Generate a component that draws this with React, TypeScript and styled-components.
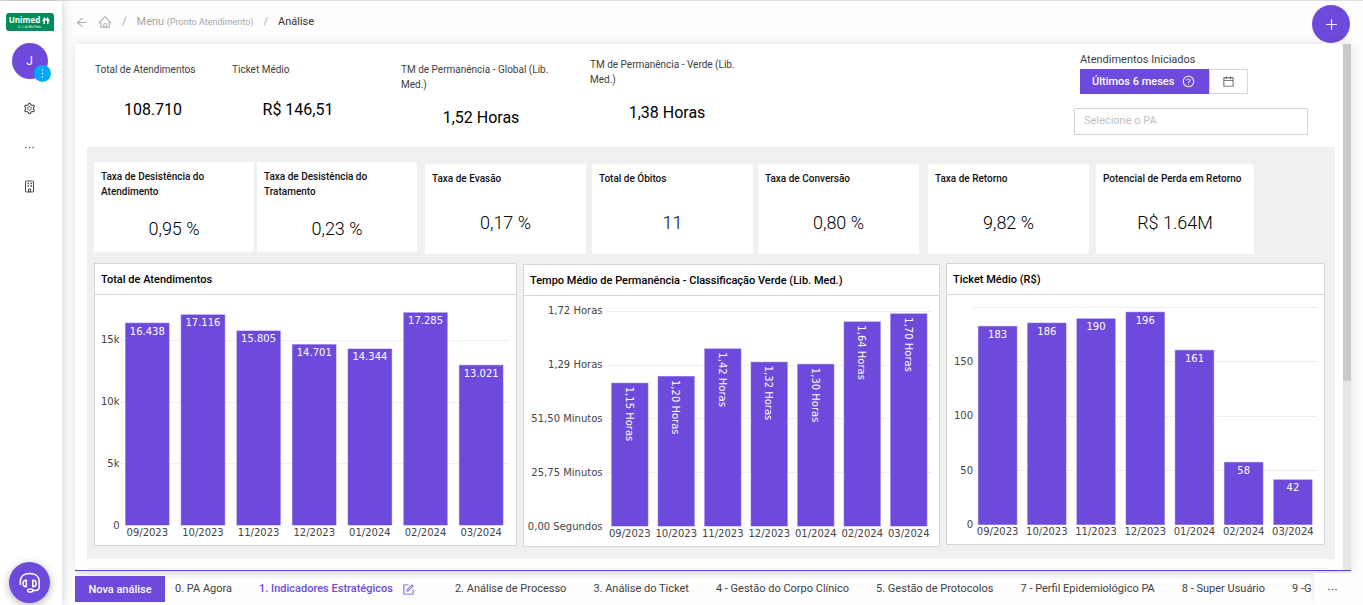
import React from "react";
import styled, { createGlobalStyle } from "styled-components";
import {
  AiOutlineArrowLeft,
  AiOutlineCalendar,
  AiOutlineEllipsis,
  AiOutlineForm,
  AiOutlineHome,
  AiOutlineMore,
  AiOutlinePlus,
  AiOutlineQuestionCircle,
  AiOutlineSetting,
} from "react-icons/ai";

const purple = "#6d4adb";

const GlobalStyle = createGlobalStyle`
  *, *::before, *::after { box-sizing: border-box; }
  body {
    margin: 0;
    background: #fdfdfd;
    color: #404040;
    font-family: Roboto, "Liberation Sans", sans-serif;
    font-size: 11px;
  }
  button, input { font: inherit; }
  button { padding: 0; border: 0; background: none; color: inherit; cursor: pointer; }
  a { color: inherit; text-decoration: none; }
  svg { display: block; }
`;

const Shell = styled.div`
  display: flex;
  min-height: 100vh;
  border-top: 1px solid #dedede;
`;

/* Sidebar */

const Sidebar = styled.nav`
  display: flex;
  flex-direction: column;
  align-items: center;
  flex: 0 0 62px;
  padding: 12px 3px 2px 0;
  background: #fff;
  box-shadow: 0 0 10px rgba(0, 0, 0, 0.2);
  z-index: 1;
`;

const Logo = styled.a`
  display: flex;
  flex-direction: column;
  align-items: center;
  width: 48px;
  height: 18px;
  border-radius: 3px 3px 0 3px;
  background: #008c58;
  color: #fff;
`;

const LogoName = styled.span`
  display: flex;
  align-items: center;
  gap: 2px;
  height: 12px;
  padding-top: 2px;
  font: 700 8px/12px "Open Sans", sans-serif;
`;

const LogoTagline = styled.span`
  height: 4px;
  font-size: 3px;
  line-height: 4px;
`;

const Avatar = styled.button`
  position: relative;
  width: 36px;
  height: 36px;
  margin-top: 12px;
  border-radius: 50%;
  background: ${purple};
  color: #fff;
  font-size: 12px;
`;

const AvatarBadge = styled.span`
  position: absolute;
  right: -3px;
  bottom: -3px;
  display: grid;
  place-items: center;
  width: 17px;
  height: 17px;
  border-radius: 50%;
  background: #00a8ff;
  font-size: 13px;
`;

const SideMenu = styled.div`
  display: flex;
  flex-direction: column;
  align-items: center;
  gap: 26px;
  margin-top: 23px;
  color: #444;
  font-size: 13px;
`;

const SideButton = styled.button`
  display: block;
  line-height: 0;
`;

const SupportButton = styled.button`
  display: grid;
  place-items: center;
  width: 41px;
  height: 41px;
  margin-top: auto;
  border-radius: 50%;
  background: ${purple};
  color: #fff;
  box-shadow: 0 2px 8px rgba(0, 0, 0, 0.3);
`;

/* Header */

const Main = styled.div`
  display: flex;
  flex-direction: column;
  flex: 1;
  min-width: 0;
  padding: 0 12px 0 13px;
`;

const Header = styled.header`
  display: flex;
  align-items: center;
  justify-content: space-between;
  height: 43px;
  padding-top: 3px;
  padding-right: 1px;
`;

const Breadcrumb = styled.nav`
  display: flex;
  align-items: center;
  gap: 10px;
  height: 16px;
  margin-bottom: 4px;
  color: #a6a6a6;
  line-height: 16px;
`;

const Small = styled.small`
  font-size: 9px;
`;

const Current = styled.span`
  color: #333;
`;

const AddButton = styled.button`
  display: grid;
  place-items: center;
  width: 38px;
  height: 38px;
  border-radius: 50%;
  background: ${purple};
  color: #fff;
  font-size: 15px;
`;

/* Dashboard panel */

const Panel = styled.main`
  display: flex;
  flex: 1;
  border-bottom: 1px solid #5b3fc4;
  background: #fff;
  box-shadow: 0 0 10px rgba(0, 0, 0, 0.12);
`;

const Content = styled.div`
  display: flex;
  flex-direction: column;
  flex: 1;
  min-width: 0;
  padding: 13px 8px 0 12px;
`;

const ScrollTrack = styled.div`
  flex: 0 0 8px;
  background: #e6e6e6;
`;

const ScrollThumb = styled.div`
  height: 64%;
  background: #c9c9c9;
`;

const Summary = styled.section`
  display: flex;
  justify-content: space-between;
  height: 90px;
  padding-left: 1px;
`;

const SummaryTiles = styled.div`
  display: grid;
  grid-template-columns: 137px 169px 189px 168px;
  height: 81px;
`;

const Tile = styled.article<{ $align: "start" | "end"; $width: number; $height: number; $card?: boolean }>`
  display: flex;
  flex-direction: column;
  align-self: ${(p) => p.$align};
  width: 100%;
  max-width: ${(p) => p.$width}px;
  height: ${(p) => p.$height}px;
  padding: ${(p) => (p.$card ? "7px 7px 0" : "0 7px")};
  background: #fff;
`;

const TileLabel = styled.h2<{ $strong?: boolean }>`
  margin: 0;
  color: ${(p) => (p.$strong ? "#111" : "#404040")};
  font-size: 10px;
  font-weight: ${(p) => (p.$strong ? 500 : 400)};
  line-height: 15px;
`;

const TileValue = styled.p<{ $card?: boolean }>`
  display: grid;
  flex: 1;
  place-items: center;
  margin: ${(p) => (p.$card ? 6 : 5)}px 0 0;
  color: #000;
  font-size: ${(p) => (p.$card ? 18 : 16)}px;
  font-weight: ${(p) => (p.$card ? 300 : 400)};
  line-height: 20px;
`;

const Filters = styled.div`
  display: flex;
  flex-direction: column;
  gap: 14px;
  width: 234px;
  margin: -6px 27px 0 0;
`;

const PeriodFilter = styled.div`
  padding-left: 6px;
`;

const FilterLabel = styled.span`
  display: block;
  height: 18px;
  line-height: 18px;
`;

const ButtonGroup = styled.div`
  display: flex;
`;

const PeriodButton = styled.button`
  display: flex;
  align-items: center;
  gap: 8px;
  height: 25px;
  padding: 0 14px 0 12px;
  background: ${purple};
  color: #fff;
  font-weight: 500;
`;

const CalendarButton = styled.button`
  display: grid;
  place-items: center;
  width: 39px;
  height: 25px;
  border: 1px solid #d9d9d9;
  background: #fff;
  color: #555;
  font-size: 13px;
`;

const UnitInput = styled.input`
  width: 100%;
  height: 27px;
  padding: 0 9px 2px;
  border: 1px solid #d3d3d3;
  border-radius: 1px;
  background: #fff;
  &::placeholder { color: #bfbfbf; opacity: 1; }
`;

const Board = styled.section`
  padding: 15px 10px 12px 7px;
  background: #f0f0f0;
`;

const RateRow = styled.div`
  display: grid;
  grid-template-columns: 163fr 168fr 167fr 166fr 170fr 168fr 160fr 69fr;
  height: 92px;
  margin-bottom: 9px;
`;

const ChartRow = styled.div`
  display: grid;
  grid-template-columns: 423fr 417fr 379fr;
  gap: 6px;
  min-height: 284px;
`;

const ChartCard = styled.article<{ $align: "start" | "end" }>`
  align-self: ${(p) => p.$align};
  min-width: 0;
  border: 1px solid #d6d6d6;
  background: #fff;
`;

const ChartTitle = styled.h2`
  height: 31px;
  margin: 0;
  padding: 1px 6px 0;
  border-bottom: 1px solid #d6d6d6;
  color: #000;
  font-size: 11px;
  font-weight: 500;
  line-height: 29px;
  white-space: nowrap;
`;

const Plot = styled.svg`
  width: 100%;
  height: auto;
  font-family: Verdana, "DejaVu Sans", sans-serif;
  font-size: 10px;
  fill: #444;
`;

const NextBoard = styled.section`
  flex: 1;
  margin: 9px 7px 0 0;
  border-top: 1px solid #f0f0f0;
`;

/* Bottom tab bar */

const TabBar = styled.nav`
  display: flex;
  align-items: center;
  height: 34px;
  padding-top: 2px;
  background: linear-gradient(rgba(0, 0, 0, 0.06), rgba(0, 0, 0, 0) 8px);
`;

const NewButton = styled.button`
  flex: none;
  width: 90px;
  height: 26px;
  background: ${purple};
  color: #fff;
  font-weight: 500;
`;

const Tabs = styled.div`
  display: flex;
  flex: 1;
  gap: 27px;
  min-width: 0;
  padding-left: 10px;
  overflow: hidden;
  white-space: nowrap;
`;

const Tab = styled.a<{ $active?: boolean }>`
  display: flex;
  flex: none;
  align-items: center;
  gap: 9px;
  padding-right: ${(p) => (p.$active ? 13 : 0)}px;
  color: ${(p) => (p.$active ? purple : "#404040")};
  font-weight: ${(p) => (p.$active ? 500 : 400)};
  line-height: 16px;
`;

const MoreTabs = styled.button`
  display: grid;
  flex: 0 0 37px;
  place-items: center;
  align-self: stretch;
  background: #fdfdfd;
  box-shadow: -4px 0 6px -4px rgba(0, 0, 0, 0.12);
  font-size: 13px;
`;

/* Data */

type Metric = { label: string; value: string; align: "start" | "end"; width: number };

const summary: Metric[] = [
  { label: "Total de Atendimentos", value: "108.710", align: "end", width: 130 },
  { label: "Ticket Médio", value: "R$ 146,51", align: "end", width: 146 },
  { label: "TM de Permanência - Global (Lib. Med.)", value: "1,52 Horas", align: "end", width: 174 },
  { label: "TM de Permanência - Verde (Lib. Med.)", value: "1,38 Horas", align: "start", width: 168 },
];

const rates: Metric[] = [
  { label: "Taxa de Desistência do Atendimento", value: "0,95 %", align: "start", width: 160 },
  { label: "Taxa de Desistência do Tratamento", value: "0,23 %", align: "start", width: 160 },
  { label: "Taxa de Evasão", value: "0,17 %", align: "end", width: 161 },
  { label: "Total de Óbitos", value: "11", align: "end", width: 161 },
  { label: "Taxa de Conversão", value: "0,80 %", align: "end", width: 161 },
  { label: "Taxa de Retorno", value: "9,82 %", align: "end", width: 161 },
  { label: "Potencial de Perda em Retorno", value: "R$ 1.64M", align: "end", width: 158 },
];

const months = ["09/2023", "10/2023", "11/2023", "12/2023", "01/2024", "02/2024", "03/2024"];

type Chart = {
  title: string;
  align: "start" | "end";
  width: number;
  height: number;
  left: number;
  right: number;
  base: number;
  scale: number;
  ticks: { at: number; text: string }[];
  tickGap: number;
  monthY: number;
  bars: { value: number; text: string }[];
  vertical?: boolean;
};

const charts: Chart[] = [
  {
    title: "Total de Atendimentos",
    align: "start",
    width: 421,
    height: 250,
    left: 24.5,
    right: 414,
    base: 230.5,
    scale: 0.01234,
    ticks: [
      { at: 0, text: "0" },
      { at: 5000, text: "5k" },
      { at: 10000, text: "10k" },
      { at: 15000, text: "15k" },
    ],
    tickGap: 0,
    monthY: 241,
    bars: [
      { value: 16438, text: "16.438" },
      { value: 17116, text: "17.116" },
      { value: 15805, text: "15.805" },
      { value: 14701, text: "14.701" },
      { value: 14344, text: "14.344" },
      { value: 17285, text: "17.285" },
      { value: 13021, text: "13.021" },
    ],
  },
  {
    title: "Tempo Médio de Permanência - Classificação Verde (Lib. Med.)",
    align: "end",
    width: 415,
    height: 250,
    left: 82.5,
    right: 408,
    base: 230.5,
    scale: 125.1,
    ticks: [
      { at: 0, text: "0,00 Segundos" },
      { at: 0.43, text: "25,75 Minutos" },
      { at: 0.86, text: "51,50 Minutos" },
      { at: 1.29, text: "1,29 Horas" },
      { at: 1.72, text: "1,72 Horas" },
    ],
    tickGap: 4,
    monthY: 241,
    bars: [
      { value: 1.149, text: "1,15 Horas" },
      { value: 1.203, text: "1,20 Horas" },
      { value: 1.424, text: "1,42 Horas" },
      { value: 1.317, text: "1,32 Horas" },
      { value: 1.3, text: "1,30 Horas" },
      { value: 1.64, text: "1,64 Horas" },
      { value: 1.704, text: "1,70 Horas" },
    ],
    vertical: true,
  },
  {
    title: "Ticket Médio (R$)",
    align: "start",
    width: 377,
    height: 249,
    left: 26,
    right: 370.5,
    base: 230,
    scale: 1.088,
    ticks: [
      { at: 0, text: "0" },
      { at: 50, text: "50" },
      { at: 100, text: "100" },
      { at: 150, text: "150" },
      { at: 200, text: "" },
    ],
    tickGap: 0,
    monthY: 240,
    bars: [
      { value: 183, text: "183" },
      { value: 186, text: "186" },
      { value: 190, text: "190" },
      { value: 196, text: "196" },
      { value: 161, text: "161" },
      { value: 58, text: "58" },
      { value: 42, text: "42" },
    ],
  },
];

const tabs = [
  "0. PA Agora",
  "1. Indicadores Estratégicos",
  "2. Análise de Processo",
  "3. Análise do Ticket",
  "4 - Gestão do Corpo Clínico",
  "5. Gestão de Protocolos",
  "7 - Perfil Epidemiológico PA",
  "8 - Super Usuário",
  "9 -G",
];

function MetricTile({ metric, card }: { metric: Metric; card?: boolean }) {
  return (
    <Tile $align={metric.align} $width={metric.width} $height={card ? 90 : 76} $card={card}>
      <TileLabel $strong={card}>{metric.label}</TileLabel>
      <TileValue $card={card}>{metric.value}</TileValue>
    </Tile>
  );
}

function BarChart({ chart }: { chart: Chart }) {
  const step = (chart.right - chart.left) / months.length;
  const y = (v: number) => chart.base - v * chart.scale;
  return (
    <ChartCard $align={chart.align}>
      <ChartTitle>{chart.title}</ChartTitle>
      <Plot viewBox={`0 0 ${chart.width} ${chart.height}`} role="img" aria-label={chart.title}>
        {chart.ticks.map((t) => (
          <g key={t.at}>
            {t.at > 0 && (
              <line
                x1={chart.left}
                x2={chart.right}
                y1={Math.floor(y(t.at)) + 0.5}
                y2={Math.floor(y(t.at)) + 0.5}
                stroke="#eee"
              />
            )}
            <text x={chart.left - chart.tickGap} y={y(t.at) + 3} textAnchor="end">
              {t.text}
            </text>
          </g>
        ))}
        {chart.bars.map((b, i) => {
          const x = chart.left + step * (i + 0.1);
          const mid = chart.left + step * (i + 0.5);
          const top = y(b.value);
          return (
            <g key={months[i]}>
              <rect x={x} y={top} width={step * 0.8} height={chart.base - top} fill={purple} stroke="#fff" strokeOpacity={0.5} />
              {chart.vertical ? (
                <text transform={`translate(${mid - 4} ${top + 4}) rotate(90)`} fill="#fff">
                  {b.text}
                </text>
              ) : (
                <text x={mid} y={top + 12} textAnchor="middle" fill="#fff">
                  {b.text}
                </text>
              )}
              <text x={mid} y={chart.monthY} textAnchor="middle">
                {months[i]}
              </text>
            </g>
          );
        })}
      </Plot>
    </ChartCard>
  );
}

function HeadsetIcon() {
  return (
    <svg width="22" height="22" viewBox="0 0 22 22" fill="none" stroke="currentColor" strokeWidth="1.500" strokeLinecap="round" strokeLinejoin="round">
      <path d="M1.300 12.500V9.500C1.300 4.500 5 1.500 10.700 1.500S20.200 4.500 20.200 9.500V15C20.200 17.200 18.800 18.500 16.500 18.500H14" />
      <path d="M7.300 8.300C5.200 8.300 4 9.500 4 11.500S5.200 14.700 7.300 14.700Z" />
      <path d="M13.800 8.300C15.900 8.300 17.200 9.500 17.200 11.500S15.900 14.700 13.800 14.700Z" />
      <rect x="8.500" y="17.200" width="5.500" height="2.800" rx="1.400" />
    </svg>
  );
}

function BuildingIcon() {
  return (
    <svg width="13" height="13" viewBox="0 0 13 13" fill="none" stroke="currentColor">
      <rect x="2.500" y="1" width="8" height="11" rx="1" />
      <path d="M4.500 3.500h1.500M7.500 3.500h1.500M4.500 6h1.500M7.500 6h1.500" strokeWidth="1.500" />
      <path d="M5.500 12V9h2v3" />
    </svg>
  );
}

function PineMark() {
  return (
    <svg width="8" height="7" viewBox="0 0 8 7" fill="currentColor">
      <path d="M2.300 0 4 2.200 5.700 0 8 4.200H6.600V7H5V4L4 2.900 3 4V7H1.400V4.200H0Z" />
    </svg>
  );
}

export default function App() {
  return (
    <>
      <GlobalStyle />
      <Shell>
        <Sidebar aria-label="Principal">
          <Logo href="#">
            <LogoName>
              Unimed <PineMark />
            </LogoName>
            <LogoTagline>S. J. do Rio Preto</LogoTagline>
          </Logo>
          <Avatar>
            J
            <AvatarBadge>
              <AiOutlineMore />
            </AvatarBadge>
          </Avatar>
          <SideMenu>
            <SideButton aria-label="Configurações">
              <AiOutlineSetting />
            </SideButton>
            <SideButton aria-label="Mais opções">
              <AiOutlineEllipsis />
            </SideButton>
            <SideButton aria-label="Unidades">
              <BuildingIcon />
            </SideButton>
          </SideMenu>
          <SupportButton aria-label="Suporte">
            <HeadsetIcon />
          </SupportButton>
        </Sidebar>

        <Main>
          <Header>
            <Breadcrumb aria-label="Navegação">
              <a href="#" aria-label="Voltar">
                <AiOutlineArrowLeft size={13} />
              </a>
              <a href="#" aria-label="Início">
                <AiOutlineHome size={14} />
              </a>
              <span>/</span>
              <a href="#">
                Menu <Small>(Pronto Atendimento)</Small>
              </a>
              <span>/</span>
              <Current>Análise</Current>
            </Breadcrumb>
            <AddButton aria-label="Adicionar">
              <AiOutlinePlus />
            </AddButton>
          </Header>

          <Panel>
            <Content>
              <Summary>
                <SummaryTiles>
                  {summary.map((m) => (
                    <MetricTile key={m.label} metric={m} />
                  ))}
                </SummaryTiles>
                <Filters>
                  <PeriodFilter role="group" aria-labelledby="period-label">
                    <FilterLabel id="period-label">Atendimentos Iniciados</FilterLabel>
                    <ButtonGroup>
                      <PeriodButton>
                        Últimos 6 meses <AiOutlineQuestionCircle size={13} />
                      </PeriodButton>
                      <CalendarButton aria-label="Escolher datas">
                        <AiOutlineCalendar />
                      </CalendarButton>
                    </ButtonGroup>
                  </PeriodFilter>
                  <UnitInput aria-label="PA" placeholder="Selecione o PA" />
                </Filters>
              </Summary>

              <Board>
                <RateRow>
                  {rates.map((m) => (
                    <MetricTile key={m.label} metric={m} card />
                  ))}
                </RateRow>
                <ChartRow>
                  {charts.map((c) => (
                    <BarChart key={c.title} chart={c} />
                  ))}
                </ChartRow>
              </Board>
              <NextBoard />
            </Content>
            <ScrollTrack>
              <ScrollThumb />
            </ScrollTrack>
          </Panel>

          <TabBar aria-label="Análises">
            <NewButton>Nova análise</NewButton>
            <Tabs>
              {tabs.map((t, i) => (
                <Tab key={t} href="#" $active={i === 1} aria-current={i === 1 ? "page" : undefined}>
                  {t}
                  {i === 1 && <AiOutlineForm size={13} />}
                </Tab>
              ))}
            </Tabs>
            <MoreTabs aria-label="Mais análises">
              <AiOutlineEllipsis />
            </MoreTabs>
          </TabBar>
        </Main>
      </Shell>
    </>
  );
}
